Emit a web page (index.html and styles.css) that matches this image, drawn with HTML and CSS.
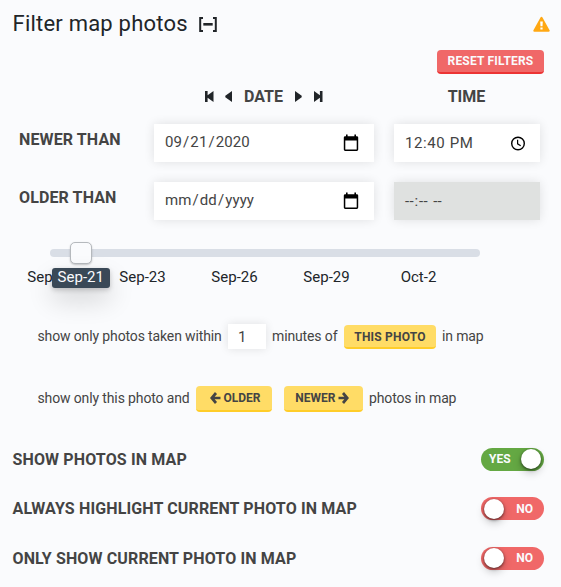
FILE: index.html
```html
<!DOCTYPE html>
<html lang="en">
<head>
<meta charset="utf-8">
<title>Filter map photos</title>
<link rel="stylesheet" href="styles.css">
</head>
<body>
<main class="panel">
  <header class="header">
    <h1 class="title">Filter map photos</h1>
    <svg class="collapse" width="18" height="15" viewBox="0 0 18 15"><path d="M4 1H1.2V14H4M14 1H16.8V14H14" fill="none" stroke="#212529" stroke-width="2"/><path d="M4.3 7.3H13.7" stroke="#212529" stroke-width="2.6"/></svg>
    <svg class="warning" width="17" height="16" viewBox="0 0 17 16"><path d="M8.5 1.8L15.7 14.7H1.3Z" fill="#ffa813" stroke="#ffa813" stroke-width="2" stroke-linejoin="round"/><path d="M7.2 5.5H9.8L9.5 10.3H7.5ZM7.4 11.4H9.6V13.6H7.4Z" fill="#fff"/></svg>
  </header>
  <div class="reset-row"><button class="btn danger">RESET FILTERS</button></div>

  <section class="range">
    <div></div>
    <div class="col-head date-head">
      <svg width="9" height="11" viewBox="0 0 9 11"><path d="M0 0H2.6V4.2L8.5 0V11L2.6 6.8V11H0Z"/></svg>
      <svg class="prev" width="7" height="11" viewBox="0 0 7 11"><path d="M7 0V11L.3 6.2V4.8Z"/></svg>
      <span>DATE</span>
      <svg class="next" width="7" height="11" viewBox="0 0 7 11"><path d="M0 0V11L6.7 6.2V4.8Z"/></svg>
      <svg width="9" height="11" viewBox="0 0 9 11"><path d="M8.5 0H5.9V4.2L0 0V11L5.9 6.8V11H8.5Z"/></svg>
    </div>
    <div class="col-head time-head">TIME</div>

    <div class="label">NEWER THAN</div>
    <div class="field"><span class="date-value">09<i>/</i>21<i>/</i>2020</span>
      <svg width="16" height="18" viewBox="0 0 16 18"><path d="M3 .5H4.6V2.2H11.4V.5H13V2.2H13.8Q15.2 2.2 15.2 3.6V15.6Q15.2 17 13.8 17H2.2Q.8 17 .8 15.6V3.6Q.8 2.2 2.2 2.2H3ZM2.3 6.4V15.5H13.7V6.4Z" fill-rule="evenodd"/></svg>
    </div>
    <div class="field time"><span class="time-value">12:40 PM</span>
      <svg width="16" height="18" viewBox="0 0 16 18"><circle cx="8" cy="9.5" r="6.3" fill="none" stroke="#000" stroke-width="1.4"/><path d="M7.6 5.7V9.8L10.7 11.7" fill="none" stroke="#000" stroke-width="1.2"/></svg>
    </div>

    <div class="label">OLDER THAN</div>
    <div class="field"><span class="date-empty">mm<i>/</i>dd<i>/</i>yyyy</span>
      <svg width="16" height="18" viewBox="0 0 16 18"><path d="M3 .5H4.6V2.2H11.4V.5H13V2.2H13.8Q15.2 2.2 15.2 3.6V15.6Q15.2 17 13.8 17H2.2Q.8 17 .8 15.6V3.6Q.8 2.2 2.2 2.2H3ZM2.3 6.4V15.5H13.7V6.4Z" fill-rule="evenodd"/></svg>
    </div>
    <div class="field time disabled"><span class="time-empty">--<i>:</i>-- <i></i>--</span></div>
  </section>

  <section class="slider">
    <div class="track"><div class="handle"></div><div class="bubble">Sep-21</div></div>
    <div class="ticks"><span>Sep-20</span><span>Sep-23</span><span>Sep-26</span><span>Sep-29</span><span>Oct-2</span></div>
  </section>

  <div class="sentence within">
    <span class="t1">show only photos taken within</span><div class="minutes">1</div><span class="t2">minutes of</span><button class="btn warn this">THIS PHOTO</button><span>in map</span>
  </div>
  <div class="sentence direction">
    <span class="t3">show only this photo and</span>
    <button class="btn warn older"><svg width="11" height="12" viewBox="0 0 11 12"><path d="M6 1L1.7 6L6 11M2 6H10.5" fill="none" stroke="#444" stroke-width="2.7"/></svg>OLDER</button>
    <button class="btn warn newer">NEWER<svg width="11" height="12" viewBox="0 0 11 12"><path d="M5 1L9.3 6L5 11M9 6H.5" fill="none" stroke="#444" stroke-width="2.7"/></svg></button>
    <span>photos in map</span>
  </div>

  <section class="switches">
    <div class="switch-row"><span>SHOW PHOTOS IN MAP</span><div class="switch on">YES<i class="knob"></i></div></div>
    <div class="switch-row"><span>ALWAYS HIGHLIGHT CURRENT PHOTO IN MAP</span><div class="switch off"><i class="knob"></i>NO</div></div>
    <div class="switch-row"><span>ONLY SHOW CURRENT PHOTO IN MAP</span><div class="switch off"><i class="knob"></i>NO</div></div>
  </section>
</main>
</body>
</html>
```
FILE: styles.css
```css
* { box-sizing: border-box; }
body { margin: 0; background: #fafbfd; color: #444; font-family: Roboto, sans-serif; font-size: 16px; }
svg { display: block; flex: none; }
i { font-style: normal; }
.panel { height: 587px; overflow: hidden; }
.header { height: 48px; padding: 0 11px 0 12.5px; display: flex; align-items: center; color: #212529; }
.title { margin: 0; font-size: 22px; font-weight: 400; line-height: 26px; letter-spacing: .22px; white-space: nowrap; }
.collapse { margin-left: 11px; }
.warning { margin-left: auto; }
.reset-row { height: 26px; padding: 2px 17px 0 0; display: flex; justify-content: flex-end; }
.btn { font: 700 12px/14px Roboto, sans-serif; border: 0; border-radius: 4px; padding: 0; display: flex; align-items: center; justify-content: center; white-space: nowrap; }
.danger { width: 107px; height: 23.5px; color: #fafbfd; background: #f06868; border-bottom: 2px solid #ec3434; letter-spacing: .2px; }
.warn { color: #444; background: #ffdc66; border-bottom: 2px solid #ffcd29; }
.range { display: grid; grid-template-columns: 115px 220px 146px; grid-template-rows: 38px 38px 38px; column-gap: 20px; row-gap: 20px; padding-left: 19px; height: 168px; margin-top: -8px; }
.col-head { display: flex; align-items: center; justify-content: center; font-weight: 700; padding-top: 22px; }
.time-head { padding-right: 1px; }
.date-head svg { fill: #212529; }
.date-head .prev { margin: 0 12px 0 11px; }
.date-head .next { margin: 0 12px; }
.label { font-weight: 700; line-height: 31px; letter-spacing: .12px; white-space: nowrap; }
.field { background: #fff; display: flex; align-items: center; justify-content: space-between; padding: 0 15px 1px 11px; font-size: 15px; box-shadow: 0 0 10px rgba(0, 0, 0, .11); white-space: nowrap; }
.date-value, .date-empty { position: relative; top: -1px; letter-spacing: .1px; }
.date-value i, .date-empty i { padding: 0 1px; }
.time { padding-right: 14px; }
.time-value { letter-spacing: .6px; }
.time-empty { letter-spacing: .3px; }
.time-empty i { padding: 0 .6px; }
.disabled { background: #dfe1e0; }
.slider { height: 86px; padding: 15px 0 0 50px; }
.track { position: relative; width: 430px; height: 8px; background: #d9dee6; border-radius: 4px; }
.handle { position: absolute; left: 20px; top: -7px; width: 22px; height: 22px; background: #fafbfd; border: 1px solid #b5b9bd; border-radius: 5px; box-shadow: 0 1px 2px rgba(0, 0, 0, .22); }
.bubble { position: absolute; left: 1.5px; top: 19px; width: 58.5px; height: 20px; line-height: 19px; text-align: center; border-radius: 3px; color: #fafbfd; background: #3a4957; font-size: 15px; box-shadow: 0 2px 5px rgba(0, 0, 0, .2), 0 12px 26px rgba(0, 0, 0, .16); }
.ticks { display: grid; grid-template-columns: repeat(5, 92px); width: 460px; margin: 10px 0 0 -45.5px; text-align: center; color: #212529; font-size: 15px; line-height: 20px; }
.sentence { display: flex; align-items: center; padding-left: 37.5px; font-size: 14px; letter-spacing: -.13px; white-space: nowrap; }
.within { height: 26px; margin-top: 3px; }
.t1 { width: 190.5px; }
.minutes { width: 38px; height: 25px; background: #fff; padding-left: 10px; line-height: 26px; font-size: 15px; box-shadow: 0 0 10px rgba(0, 0, 0, .11); }
.t2 { width: 72px; margin-left: 6px; }
.this { width: 92px; height: 24px; margin-right: 6px; letter-spacing: .2px; padding-top: 1px; position: relative; top: 1px; }
.direction { height: 26px; margin-top: 36px; }
.t3 { width: 158.5px; }
.older { width: 76px; height: 25.5px; gap: 2px; margin-right: 12px; padding: 0 0 1px 3px; position: relative; top: 1px; }
.newer { width: 79px; height: 25.5px; gap: 2.5px; margin-right: 6px; padding: 0 3px 1px 0; position: relative; top: 1px; }
.switches { margin-top: 23.6px; display: flex; flex-direction: column; }
.switch-row { height: 49.4px; padding: 0 17px 0 12.5px; display: flex; align-items: center; justify-content: space-between; font-weight: 700; letter-spacing: .13px; white-space: nowrap; }
.switch { width: 63px; height: 23px; border-radius: 12px; display: flex; align-items: center; font-size: 12px; color: #fafbfd; letter-spacing: 0; }
.knob { width: 20px; height: 20px; border-radius: 50%; background: #fff; box-shadow: 0 1px 3px rgba(0, 0, 0, .6), 0 4px 8px rgba(0, 0, 0, .22); }
.on { background: #64a843; padding: 0 3px 0 8px; justify-content: space-between; }
.off { background: #f06868; padding: 0 11px 0 3px; justify-content: space-between; }
```
